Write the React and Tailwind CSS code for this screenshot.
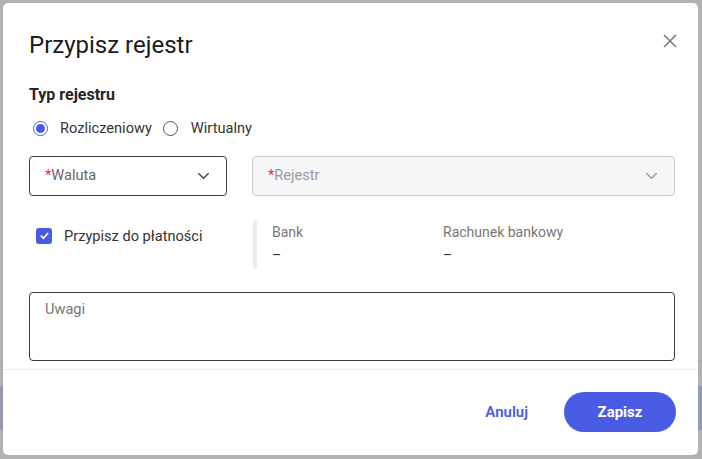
import React from 'react'

function Chevron({ className }) {
  return (
    <svg viewBox="0 0 16 16" className={className} fill="none" stroke="currentColor" strokeWidth="1.5">
      <path d="M2.5 5.5 8 11l5.5-5.5" />
    </svg>
  )
}

export default function App() {
  return (
    <div className="relative w-[702px] h-[459px] overflow-hidden bg-[#b1b1b1] font-['Roboto',sans-serif]">
      {/* faint underlying page strip */}
      <div className="absolute left-0 right-0 top-[386px] h-[44px] bg-[#9598b3]" />
      <div className="absolute left-0 right-0 top-[360px] h-px bg-[#a8a8a8]" />

      <div className="absolute left-[3px] top-[3px] w-[695px] h-[452px] bg-white rounded-[5px] flex flex-col">
        <div className="flex items-start justify-between pl-[26px] pr-[20px] pt-[27px]">
          <h1 className="text-[24px] leading-[30px] text-[#1b1b1b]">Przypisz rejestr</h1>
          <svg viewBox="0 0 16 16" className="w-[16px] h-[16px] mt-[3px] text-[#7a7a7a]" stroke="currentColor" strokeWidth="1.6">
            <path d="M2 2l12 12M14 2L2 14" />
          </svg>
        </div>

        <div className="pl-[26px] pr-[23px] pt-[26px]">
          <div className="text-[16px] font-bold leading-[18px] text-[#262626]">Typ rejestru</div>
          <div className="flex items-center mt-[14px] ml-[4px] text-[14.6px] text-[#333]">
            <span className="w-[15px] h-[15px] rounded-full border border-[#4a5be3] flex items-center justify-center">
              <span className="w-[9px] h-[9px] rounded-full bg-[#4a5be3]" />
            </span>
            <span className="ml-[12px]">Rozliczeniowy</span>
            <span className="ml-[11px] w-[15px] h-[15px] rounded-full border border-[#555]" />
            <span className="ml-[13px]">Wirtualny</span>
          </div>

          <div className="flex mt-[16px] gap-[25px]">
            <div className="w-[198px] h-[40px] border border-[#3a3a3a] rounded-[4px] flex items-center justify-between pl-[15px] pr-[15px] text-[14.6px]">
              <span className="text-[#666]"><span className="text-[#e0314b]">*</span>Waluta</span>
              <Chevron className="w-[15px] h-[15px] text-[#444]" />
            </div>
            <div className="flex-1 h-[40px] border border-[#c9c9c9] bg-[#f5f6f8] rounded-[4px] flex items-center justify-between pl-[15px] pr-[15px] text-[14.6px]">
              <span className="text-[#9a9a9a]"><span className="text-[#e0314b]">*</span>Rejestr</span>
              <Chevron className="w-[15px] h-[15px] text-[#9a9a9a]" />
            </div>
          </div>

          <div className="flex mt-[24px] h-[49px]">
            <div className="w-[224px] flex items-start pt-[8px] pl-[7px]">
              <span className="w-[16px] h-[16px] rounded-[3px] bg-[#4a5be3] flex items-center justify-center">
                <svg viewBox="0 0 12 12" className="w-[11px] h-[11px]" fill="none" stroke="white" strokeWidth="1.8">
                  <path d="M2 6.2 4.8 9 10 3.2" />
                </svg>
              </span>
              <span className="ml-[12px] text-[14.6px] leading-[16px] text-[#333]">Przypisz do płatności</span>
            </div>
            <div className="w-[4px] bg-[#ececec] rounded-full" />
            <div className="flex pl-[15px] pt-[3px] text-[14px] text-[#777]">
              <div className="w-[171px]">
                <div className="leading-[18px]">Bank</div>
                <div className="mt-[5px] leading-[18px] text-[#333]">–</div>
              </div>
              <div>
                <div className="leading-[18px]">Rachunek bankowy</div>
                <div className="mt-[5px] leading-[18px] text-[#333]">–</div>
              </div>
            </div>
          </div>

          <div className="mt-[23px] h-[69px] border border-[#3a3a3a] rounded-[4px] px-[15px] pt-[6px] text-[14.6px] text-[#777]">
            Uwagi
          </div>
        </div>

        <div className="mt-[8px] h-px bg-[#eeeeee]" />

        <div className="flex-1 flex items-center justify-end pr-[22px]">
          <span className="text-[15px] font-semibold text-[#4a5be3] mr-[36px]">Anuluj</span>
          <span className="w-[112px] h-[40px] rounded-full bg-[#4a5be3] text-white text-[15px] font-bold flex items-center justify-center">Zapisz</span>
        </div>
      </div>
    </div>
  )
}
